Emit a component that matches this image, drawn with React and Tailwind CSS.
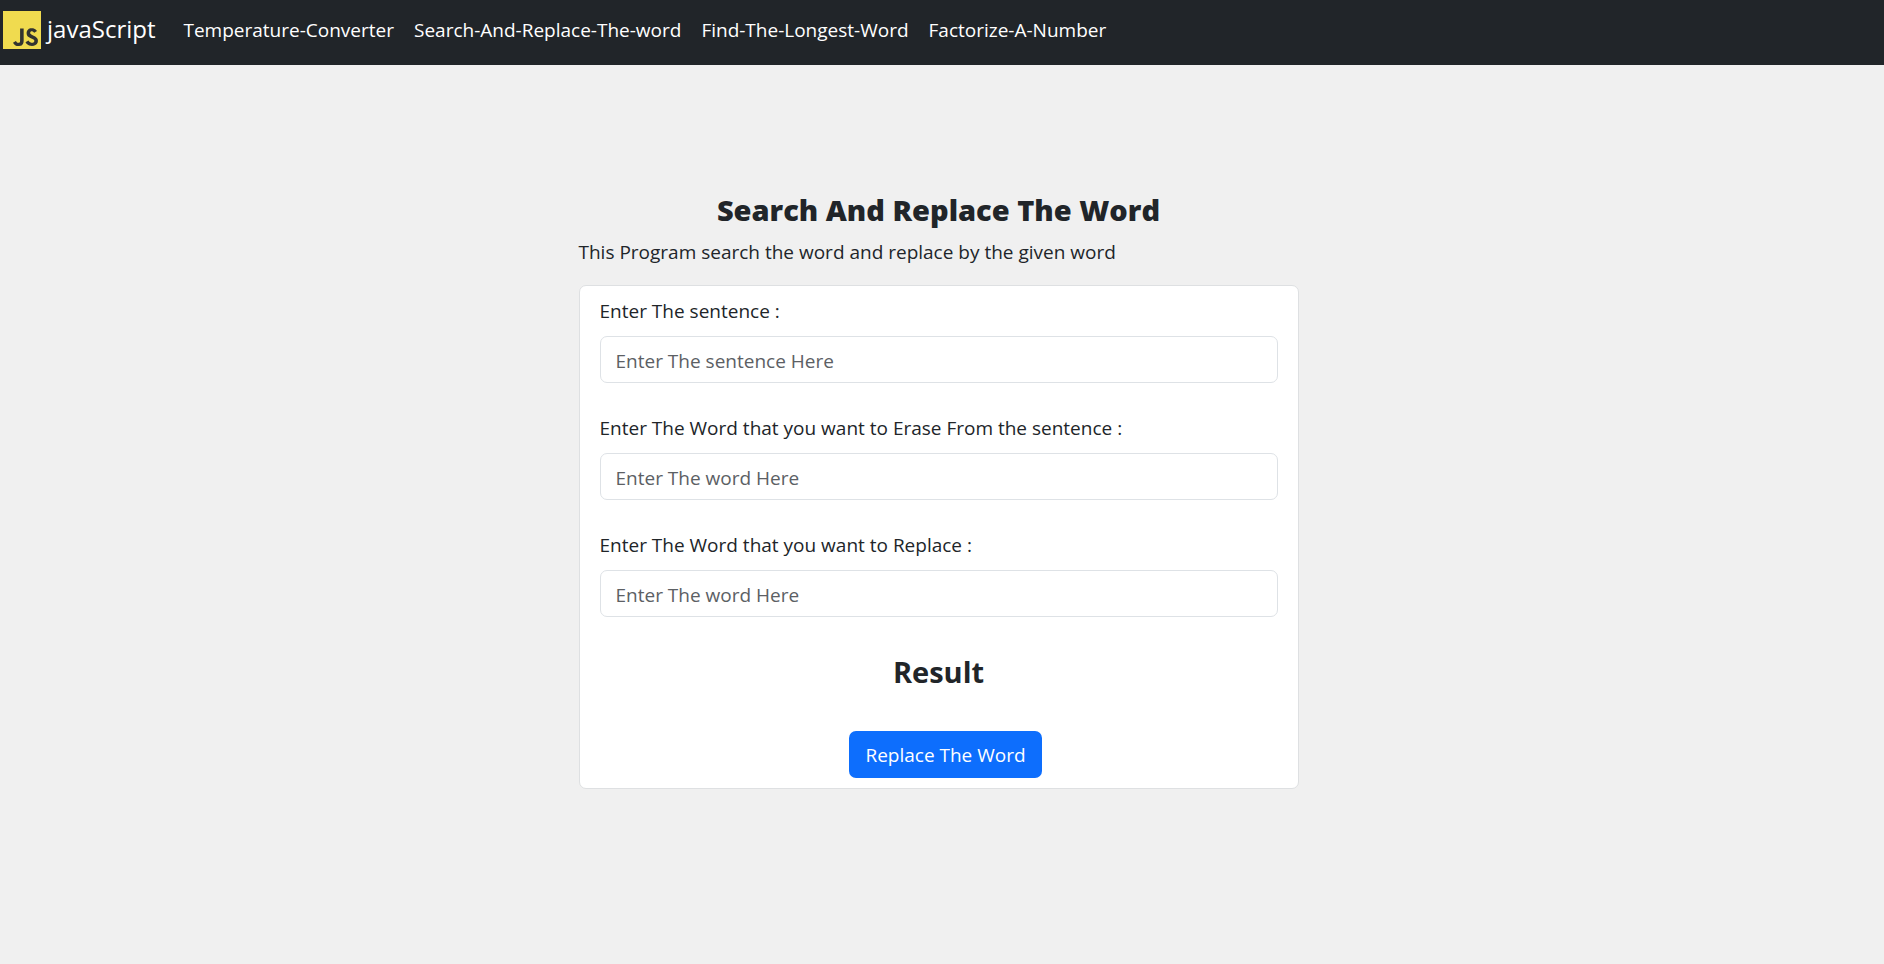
import { useState } from "react";
import { SiJavascript } from "react-icons/si";

const links = [
  "Temperature-Converter",
  "Search-And-Replace-The-word",
  "Find-The-Longest-Word",
  "Factorize-A-Number",
];

function Navbar() {
  return (
    <nav className="flex min-h-[65px] items-start bg-[#212529] pt-[11px] pl-[3px] text-white">
      <a href="#" className="mr-7 flex items-start gap-1.5">
        <SiJavascript className="size-[38px] bg-[#323330] text-[#f0db4f]" aria-hidden="true" />
        <span className="text-[24px] leading-9">javaScript</span>
      </a>
      <ul className="flex flex-wrap gap-x-5">
        {links.map((name) => (
          <li key={name}>
            <a href={"#" + name} className="text-[19px] leading-[38px]">
              {name}
            </a>
          </li>
        ))}
      </ul>
    </nav>
  );
}

function Field({ id, label, placeholder, value, onChange }) {
  return (
    <div>
      <label htmlFor={id} className="mb-2.5 block text-[19px] leading-[30px]">
        {label}
      </label>
      <input
        id={id}
        type="text"
        placeholder={placeholder}
        value={value}
        onChange={(e) => onChange(e.target.value)}
        className="block h-[47px] w-full rounded-[7px] border border-[#dee2e6] bg-white px-[15px] pt-0.5 text-[19px] placeholder:text-[#5c6064]"
      />
    </div>
  );
}

export default function App() {
  const [sentence, setSentence] = useState("");
  const [erase, setErase] = useState("");
  const [replacement, setReplacement] = useState("");
  const [result, setResult] = useState("");

  function handleSubmit(e) {
    e.preventDefault();
    setResult(erase ? sentence.replaceAll(erase, replacement) : sentence);
  }

  return (
    <div className="min-h-screen bg-[#f0f0f0] font-['Open_Sans','Noto_Sans',sans-serif] text-[#212529]">
      <Navbar />
      <main className="pt-[126px] pr-[7px]">
        <div className="mx-auto w-full max-w-[720px]">
          <h1 className="mb-2 text-center text-[29px] leading-[38px] font-extrabold">
            Search And Replace The Word
          </h1>
          <p className="mb-[18px] text-[19px] leading-[30px]">
            This Program search the word and replace by the given word
          </p>
          <form
            onSubmit={handleSubmit}
            className="rounded-[7px] border border-[#dee0e2] bg-white px-5 py-2.5"
          >
            <div className="flex flex-col gap-[30px]">
              <Field
                id="sentence"
                label="Enter The sentence :"
                placeholder="Enter The sentence Here"
                value={sentence}
                onChange={setSentence}
              />
              <Field
                id="erase"
                label="Enter The Word that you want to Erase From the sentence :"
                placeholder="Enter The word Here"
                value={erase}
                onChange={setErase}
              />
              <Field
                id="replacement"
                label="Enter The Word that you want to Replace :"
                placeholder="Enter The word Here"
                value={replacement}
                onChange={setReplacement}
              />
            </div>
            <h2 className="mt-9 text-center text-[29px] leading-[38px] font-bold">Result</h2>
            <output className="block min-h-10 text-center text-[19px] leading-[30px]">{result}</output>
            <div className="flex justify-center pl-3.5">
              <button
                type="submit"
                className="h-[47px] rounded-[7px] bg-[#0d6efd] px-4 pt-0.5 text-[19px] text-white"
              >
                Replace The Word
              </button>
            </div>
          </form>
        </div>
      </main>
    </div>
  );
}
